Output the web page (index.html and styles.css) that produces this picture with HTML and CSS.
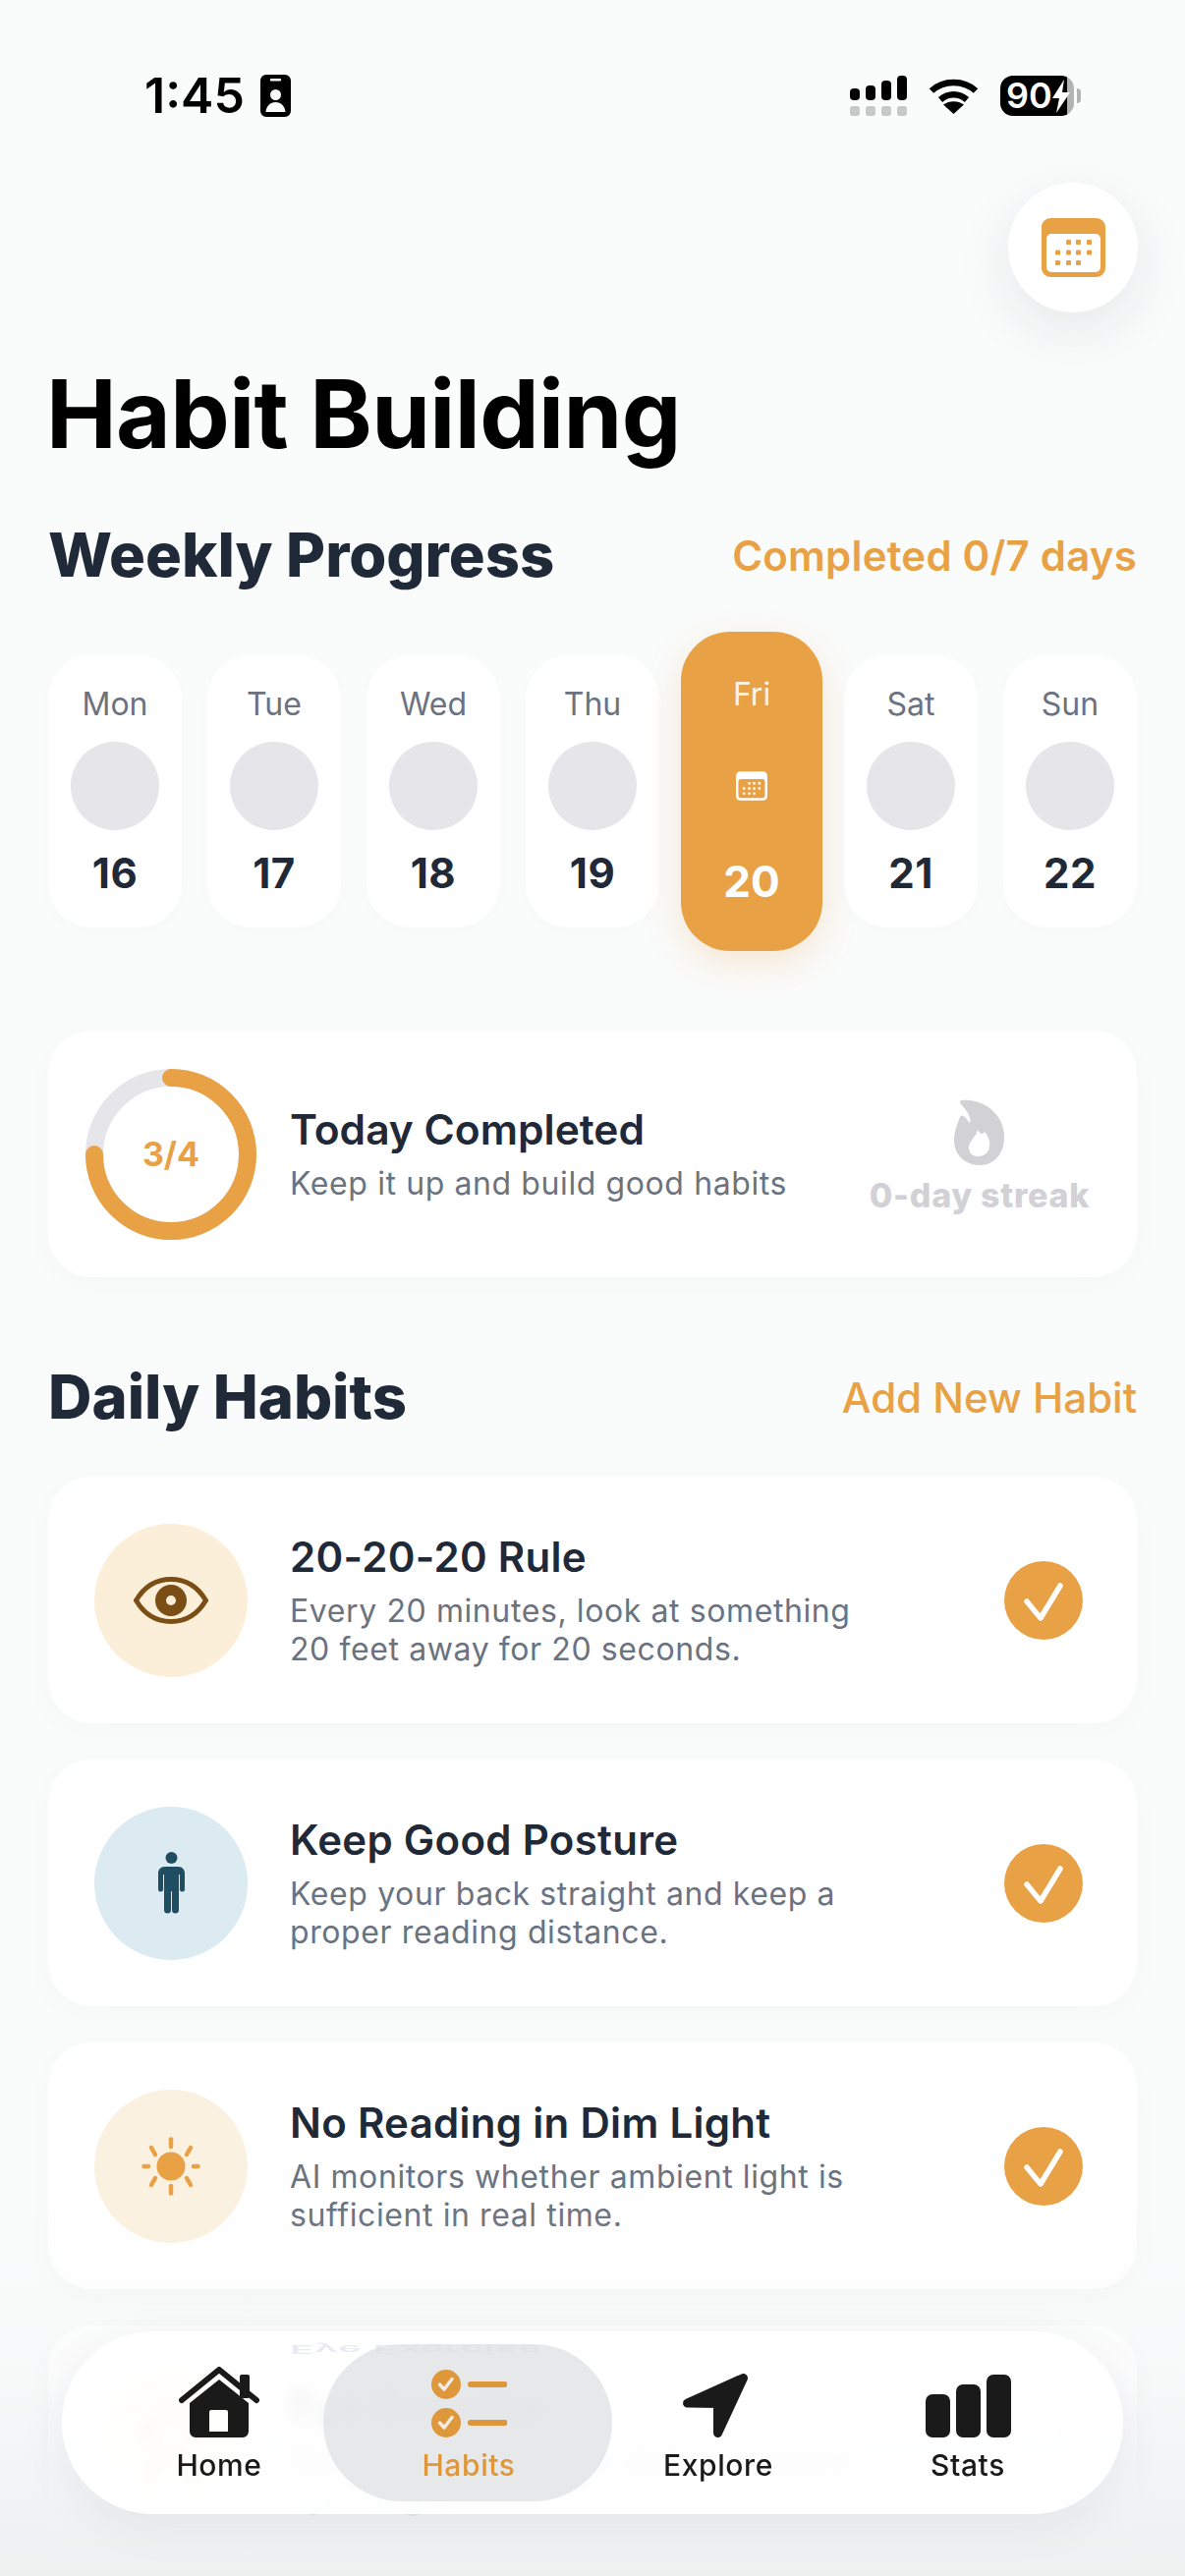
FILE: index.html
```html
<!DOCTYPE html>
<html lang="en">
<head>
  <meta charset="UTF-8" />
  <title>Habit Building</title>
  <link rel="stylesheet" href="styles.css">
</head>
<body>
  <svg class="defs" width="0" height="0">
    <symbol id="calendar" viewBox="0 0 65 60">
      <path fill-rule="evenodd" d="M9 0H56a9 9 0 0 1 9 9V51a9 9 0 0 1-9 9H9a9 9 0 0 1-9-9V9a9 9 0 0 1 9-9ZM10 16a5 5 0 0 0-5 5V50a5 5 0 0 0 5 5H55a5 5 0 0 0 5-5V21a5 5 0 0 0-5-5Z"/>
      <rect x="25" y="22" width="5" height="5" rx="1"/><rect x="35" y="22" width="5" height="5" rx="1"/><rect x="46" y="22" width="5" height="5" rx="1"/>
      <rect x="14" y="32.500" width="5" height="5" rx="1"/><rect x="25" y="32.500" width="5" height="5" rx="1"/><rect x="35" y="32.500" width="5" height="5" rx="1"/><rect x="46" y="32.500" width="5" height="5" rx="1"/>
      <rect x="14" y="43" width="5" height="5" rx="1"/><rect x="25" y="43" width="5" height="5" rx="1"/><rect x="35" y="43" width="5" height="5" rx="1"/>
    </symbol>
    <symbol id="tick" viewBox="0 0 80 80">
      <circle cx="40" cy="40" r="40" fill="#e8a145"/>
      <path d="M23 41 37 58 57 25" fill="none" stroke="#fff" stroke-width="5.500" stroke-linecap="round" stroke-linejoin="round"/>
    </symbol>
  </svg>

  <div class="status">
    <div class="status-left">
      <span class="clock">1:45</span>
      <svg class="badge-icon" viewBox="0 0 31 43"><path fill-rule="evenodd" d="M6 0H25a6 6 0 0 1 6 6V37a6 6 0 0 1-6 6H6a6 6 0 0 1-6-6V6a6 6 0 0 1 6-6ZM11 4a1 1 0 0 0 0 2.400H20a1 1 0 0 0 0-2.400ZM15.500 15a5.500 5.500 0 1 0 0 11 5.500 5.500 0 0 0 0-11ZM15.500 28C10 28 6 32 5.500 38H25.500C25 32 21 28 15.500 28Z"/></svg>
    </div>
    <div class="status-right">
      <svg class="signal-icon" viewBox="0 0 58 41">
        <rect x="0" y="13" width="10" height="12" rx="4"/><rect x="16" y="10" width="10" height="15" rx="4"/><rect x="32" y="5" width="10" height="20" rx="4"/><rect x="48" y="0" width="10" height="25" rx="4"/>
        <g fill="#c8c8c8"><rect x="0" y="31" width="10" height="10" rx="3"/><rect x="16" y="31" width="10" height="10" rx="3"/><rect x="32" y="31" width="10" height="10" rx="3"/><rect x="48" y="31" width="10" height="10" rx="3"/></g>
      </svg>
      <svg class="wifi-icon" viewBox="0 0 51 37">
        <path d="M3 13.500C15 2 36 2 48 13.500M12 22.500C20 15.500 31 15.500 39 22.500" fill="none" stroke="#000" stroke-width="6.500"/>
        <path d="M25.500 37 15 27.500C21 23 30 23 36 27.500Z"/>
      </svg>
      <div class="battery">
        <span class="battery-level">90</span>
        <svg class="bolt-icon" viewBox="0 0 18 34"><path d="M12 0 0 19H7L4 34 18 13H10Z"/></svg>
      </div>
    </div>
  </div>

  <div class="top-action">
    <button class="calendar-btn"><svg class="calendar-icon"><use href="#calendar"/></svg></button>
  </div>

  <h1 class="page-title">Habit Building</h1>

  <div class="section-head">
    <h2>Weekly Progress</h2>
    <span class="section-note">Completed 0/7 days</span>
  </div>

  <div class="week">
    <div class="day"><span class="day-name">Mon</span><span class="day-dot"></span><span class="day-num">16</span></div>
    <div class="day"><span class="day-name">Tue</span><span class="day-dot"></span><span class="day-num">17</span></div>
    <div class="day"><span class="day-name">Wed</span><span class="day-dot"></span><span class="day-num">18</span></div>
    <div class="day"><span class="day-name">Thu</span><span class="day-dot"></span><span class="day-num">19</span></div>
    <div class="day today">
      <span class="day-name">Fri</span>
      <span class="day-mark"><svg class="day-calendar"><use href="#calendar"/></svg></span>
      <span class="day-num">20</span>
    </div>
    <div class="day"><span class="day-name">Sat</span><span class="day-dot"></span><span class="day-num">21</span></div>
    <div class="day"><span class="day-name">Sun</span><span class="day-dot"></span><span class="day-num">22</span></div>
  </div>

  <div class="summary">
    <div class="ring">
      <svg viewBox="0 0 174 174">
        <circle cx="87" cy="87" r="78" fill="none" stroke="#e5e5ea" stroke-width="18"/>
        <path d="M87 9A78 78 0 1 1 9 87" fill="none" stroke="#e8a145" stroke-width="18" stroke-linecap="round"/>
      </svg>
      <span class="ring-text">3/4</span>
    </div>
    <div class="summary-text">
      <div class="summary-title">Today Completed</div>
      <div class="summary-sub">Keep it up and build good habits</div>
    </div>
    <div class="streak">
      <svg class="flame-icon" viewBox="0 0 51 67"><path fill-rule="evenodd" d="M8 1C24-1 51 10 51 39 51 56 40 67 26 67 11 67 0 56 0 42 0 32 4 24 6 18 7 16 9 16 11 18 13 20 14 22 16 24 18 20 14 12 7 5 5 3 6 1 8 1ZM24 31C27 36 29 36 31 33 35 38 37 43 36 48 35 55 30 58 24 58 18 58 15 54 15 49 15 42 22 39 24 31Z"/></svg>
      <span class="streak-text">0-day streak</span>
    </div>
  </div>

  <div class="section-head daily-head">
    <h2>Daily Habits</h2>
    <span class="section-link">Add New Habit</span>
  </div>

  <div class="habits">
    <div class="habit">
      <div class="habit-icon icon-eye">
        <svg class="eye-icon" viewBox="0 0 76 48">
          <path d="M2.500 24C12 8 24 2.500 38 2.500S64 8 73.500 24C64 40 52 45.500 38 45.500S12 40 2.500 24Z" fill="none" stroke="#7a4e14" stroke-width="5"/>
          <path fill="#7a4e14" fill-rule="evenodd" d="M38 8a16 16 0 1 0 0 32 16 16 0 0 0 0-32ZM38 19a5 5 0 1 1 0 10 5 5 0 0 1 0-10Z"/>
        </svg>
      </div>
      <div class="habit-text">
        <div class="habit-title">20-20-20 Rule</div>
        <div class="habit-desc">Every 20 minutes, look at something<br>20 feet away for 20 seconds.</div>
      </div>
      <svg class="habit-check"><use href="#tick"/></svg>
    </div>

    <div class="habit">
      <div class="habit-icon icon-posture">
        <svg class="person-icon" viewBox="0 0 27 63">
          <circle cx="13.500" cy="6" r="6"/>
          <path d="M6.500 15H20.500C24.100 15 27 17.900 27 21.500V38A2.500 2.500 0 0 1 22 38V23H21V59A3.500 3.500 0 0 1 14 59V40H13V59A3.500 3.500 0 0 1 6 59V23H5V38A2.500 2.500 0 0 1 0 38V21.500C0 17.900 2.900 15 6.500 15Z"/>
        </svg>
      </div>
      <div class="habit-text">
        <div class="habit-title">Keep Good Posture</div>
        <div class="habit-desc">Keep your back straight and keep a<br>proper reading distance.</div>
      </div>
      <svg class="habit-check"><use href="#tick"/></svg>
    </div>

    <div class="habit">
      <div class="habit-icon icon-light">
        <svg class="sun-icon" viewBox="0 0 60 60">
          <circle cx="30" cy="30" r="14.500"/>
          <g stroke="#e8a145" stroke-width="4.500" stroke-linecap="round">
            <path d="M30 2.500V10"/><path d="M30 50V57.500"/><path d="M2.500 30H7"/><path d="M53 30H57.500"/>
            <path d="M10 11 14 18"/><path d="M50 11 46 18"/><path d="M10 49 14 42"/><path d="M50 49 46 42"/>
          </g>
        </svg>
      </div>
      <div class="habit-text">
        <div class="habit-title">No Reading in Dim Light</div>
        <div class="habit-desc">AI monitors whether ambient light is<br>sufficient in real time.</div>
      </div>
      <svg class="habit-check"><use href="#tick"/></svg>
    </div>

    <div class="habit">
      <div class="habit-icon icon-exercise">
        <svg class="exercise-icon" viewBox="0 0 64 88">
          <path d="M8 34C8 14 20 6 32 6S56 14 56 34M2 24 8 36 16 26M14 60 32 46 50 60M14 60 8 84M50 60 58 84" fill="none" stroke="#e8a145" stroke-width="6" stroke-linecap="round" stroke-linejoin="round"/>
        </svg>
      </div>
      <div class="habit-text">
        <div class="habit-title">Eye Exercise</div>
        <div class="habit-desc">Rotate eyes, practice daily to reduce<br>eye fatigue.</div>
      </div>
      <span class="habit-open"></span>
    </div>
  </div>

  <div class="bottom-fade"></div>

  <nav class="tabbar">
    <span class="tabbar-glint" aria-hidden="true">Eye Exercise</span>
    <a class="tab">
      <svg class="home-icon" viewBox="0 0 82 72">
        <rect x="62" y="8" width="10" height="24" rx="2"/>
        <path d="M3 34 41 3 79 34" fill="none" stroke="#1a1a1a" stroke-width="6" stroke-linecap="round" stroke-linejoin="round"/>
        <path fill-rule="evenodd" d="M41 13 71 37V66a6 6 0 0 1-6 6H17a6 6 0 0 1-6-6V37ZM33 44a2 2 0 0 0-2 2V66H50V46a2 2 0 0 0-2-2Z"/>
      </svg>
      <span>Home</span>
    </a>
    <a class="tab active">
      <svg class="habits-icon" viewBox="0 0 77 69">
        <circle cx="15" cy="15" r="15"/><circle cx="15" cy="54" r="15"/>
        <path d="M8.500 15 13 20 21 9.500M8.500 54 13 59 21 48.500" fill="none" stroke="#f3ece2" stroke-width="3.500" stroke-linecap="round" stroke-linejoin="round"/>
        <path d="M40 15H74.500M40 54H74.500" stroke="#de973b" stroke-width="6" stroke-linecap="round"/>
      </svg>
      <span>Habits</span>
    </a>
    <a class="tab">
      <svg class="explore-icon" viewBox="0 0 66 65"><path d="M4.500 30 61.500 4.500 35.500 60.500V30.500Z" stroke="#1a1a1a" stroke-width="9" stroke-linejoin="round"/></svg>
      <span>Explore</span>
    </a>
    <a class="tab">
      <svg class="stats-icon" viewBox="0 0 87 64"><rect x="0" y="20" width="25" height="44" rx="7"/><rect x="31" y="10" width="25" height="54" rx="7"/><rect x="62" y="0" width="25" height="64" rx="7"/></svg>
      <span>Stats</span>
    </a>
  </nav>
</body>
</html>
```

FILE: styles.css
```css
* {
  box-sizing: border-box;
}

body {
  margin: 0;
  width: 1206px;
  height: 2622px;
  position: relative;
  overflow: hidden;
  background: #fafbfb;
  color: #1f2937;
  font-family: Inter, "Liberation Sans", sans-serif;
}

.defs {
  position: absolute;
}

/* status bar */
.status {
  display: flex;
  justify-content: space-between;
  align-items: flex-start;
  padding: 76px 113px 0 147px;
  height: 119px;
  color: #000;
}

.status-left {
  display: flex;
  align-items: center;
  gap: 16px;
}

.clock {
  font-size: 50px;
  font-weight: 600;
  line-height: 43px;
}

.badge-icon {
  width: 31px;
  height: 43px;
}

.status-right {
  display: flex;
  align-items: flex-start;
}

.signal-icon {
  width: 58px;
  height: 41px;
  margin-top: 1px;
}

.wifi-icon {
  width: 51px;
  height: 37px;
  margin: 3px 22px 0;
}

.battery {
  position: relative;
  width: 75px;
  height: 41px;
  margin-top: 1px;
  padding-left: 6px;
  border-radius: 13px;
  background: linear-gradient(to right, #000 68px, #b3b3b3 68px);
  color: #fff;
  font-size: 36px;
  font-weight: 600;
  line-height: 41px;
}

.battery::after {
  content: "";
  position: absolute;
  right: -7px;
  top: 13px;
  width: 4px;
  height: 15px;
  border-radius: 0 8px 8px 0;
  background: #b3b3b3;
}

.bolt-icon {
  position: absolute;
  left: 53px;
  top: 4px;
  width: 18px;
  height: 34px;
  fill: #fff;
}

/* header */
.top-action {
  display: flex;
  justify-content: flex-end;
  padding: 67px 48px 0 0;
}

.calendar-btn {
  display: flex;
  align-items: center;
  justify-content: center;
  width: 132px;
  height: 132px;
  padding: 0;
  border: none;
  border-radius: 50%;
  background: #fff;
  box-shadow: 0 18px 60px rgba(30, 40, 60, 0.09);
}

.calendar-icon {
  width: 65px;
  height: 60px;
  fill: #e8a145;
}

.page-title {
  margin: 45px 0 0 47px;
  color: #000;
  font-size: 96px;
  font-weight: 700;
  line-height: 116px;
  letter-spacing: -0.6px;
}

.section-head {
  display: flex;
  justify-content: space-between;
  align-items: center;
  height: 72px;
  margin: 50px 49px 0 49px;
}

.section-head h2 {
  margin: 0;
  font-size: 61.500px;
  font-weight: 800;
  line-height: 72px;
}

.section-note {
  color: #e8a145;
  font-size: 42px;
  font-weight: 600;
  letter-spacing: 0.2px;
}

.section-link {
  color: #e8a145;
  font-size: 42px;
  font-weight: 500;
}

/* week strip */
.week {
  display: grid;
  grid-template-columns: repeat(7, 1fr);
  gap: 26px;
  align-items: center;
  margin: 42px 49px 0 49px;
}

.day {
  display: flex;
  flex-direction: column;
  align-items: center;
  height: 277px;
  padding-top: 31px;
  border-radius: 44px;
  background: #fff;
  box-shadow: 0 4px 16px rgba(30, 40, 60, 0.015);
}

.day-name {
  color: #6b7280;
  font-size: 32px;
  line-height: 38px;
}

.day-dot {
  width: 90px;
  height: 90px;
  margin-top: 19px;
  border-radius: 50%;
  background: #e5e5ea;
}

.day-num {
  margin-top: 20px;
  font-size: 42px;
  font-weight: 700;
  line-height: 48px;
  letter-spacing: 0.5px;
}

.today {
  height: 325px;
  margin: 0 -4px;
  padding-top: 45px;
  border-radius: 50px;
  background: #e8a145;
  box-shadow: 0 12px 36px rgba(232, 161, 69, 0.22);
}

.today .day-name {
  color: #fdf4e6;
}

.day-mark {
  display: flex;
  align-items: center;
  justify-content: center;
  height: 90px;
  margin-top: 29px;
}

.day-calendar {
  width: 32px;
  height: 30px;
  fill: #fff;
}

.today .day-num {
  margin-top: 26px;
  color: #fff;
  font-size: 44px;
  line-height: 52px;
  letter-spacing: 0;
}

/* today summary */
.summary {
  display: flex;
  align-items: center;
  height: 251px;
  margin: 81px 49px 0 49px;
  padding: 0 48px 0 38px;
  border-radius: 44px;
  background: #fff;
  box-shadow: 0 8px 30px rgba(30, 40, 60, 0.025);
}

.ring {
  position: relative;
  display: flex;
  align-items: center;
  justify-content: center;
  width: 174px;
  height: 174px;
  margin-right: 34px;
}

.ring svg {
  position: absolute;
  inset: 0;
}

.ring-text {
  color: #e8a145;
  font-size: 34px;
  font-weight: 700;
}

.summary-title {
  font-size: 42.500px;
  font-weight: 600;
  line-height: 52px;
}

.summary-sub {
  margin-top: 9px;
  color: #6b7280;
  font-size: 32px;
  line-height: 40px;
  letter-spacing: 0.6px;
}

.streak {
  display: flex;
  flex-direction: column;
  align-items: center;
  gap: 11px;
  margin-left: auto;
  padding-top: 6px;
}

.flame-icon {
  width: 51px;
  height: 67px;
  fill: #d1d1d6;
}

.streak-text {
  color: #d1d1d6;
  font-size: 34px;
  font-weight: 800;
  line-height: 40px;
  letter-spacing: 0.7px;
}

.daily-head {
  margin-top: 86px;
}

/* habit list */
.habits {
  display: flex;
  flex-direction: column;
  gap: 37px;
  margin: 45px 49px 0 49px;
}

.habit {
  display: flex;
  align-items: center;
  height: 251px;
  padding: 0 55px 0 47px;
  border-radius: 44px;
  background: #fff;
  box-shadow: 0 8px 30px rgba(30, 40, 60, 0.025);
}

.habit-icon {
  display: flex;
  flex: none;
  align-items: center;
  justify-content: center;
  width: 156px;
  height: 156px;
  margin-right: 43px;
  border-radius: 50%;
}

.icon-eye {
  background: #fcefd9;
}

.icon-posture {
  background: #dceaf2;
}

.icon-light {
  background: #fbf1e0;
}

.icon-exercise {
  background: #fbf1e0;
}

.eye-icon {
  width: 76px;
  height: 48px;
}

.person-icon {
  width: 27px;
  height: 63px;
  fill: #1f4e63;
}

.sun-icon {
  width: 60px;
  height: 60px;
  fill: #e8a145;
}

.exercise-icon {
  width: 64px;
  height: 88px;
}

.habit-text {
  flex: 1;
}

.habit-title {
  font-size: 42px;
  font-weight: 600;
  line-height: 50px;
  letter-spacing: 0.3px;
}

.habit-desc {
  margin-top: 10px;
  color: #6b7280;
  font-size: 32px;
  line-height: 39px;
  letter-spacing: 0.6px;
}

.habit-check {
  flex: none;
  width: 80px;
  height: 80px;
}

.habit-open {
  flex: none;
  width: 80px;
  height: 80px;
  border: 6px solid #d9dde4;
  border-radius: 50%;
}

/* scroll edge + tab bar */
.bottom-fade {
  position: absolute;
  left: 0;
  right: 0;
  bottom: 0;
  height: 380px;
  background: linear-gradient(to bottom, rgba(240, 241, 242, 0), rgba(240, 241, 242, 0.3) 50%, rgba(240, 241, 242, 0.95) 85%, #eff0f0);
}

.tabbar {
  position: absolute;
  left: 63px;
  top: 2373px;
  display: grid;
  grid-template-columns: repeat(4, 1fr);
  width: 1080px;
  height: 186px;
  padding: 0 29px 0 31px;
  border: 2px solid rgba(255, 255, 255, 0.85);
  border-radius: 93px;
  background: rgba(255, 255, 255, 0.9);
  backdrop-filter: blur(8px);
  box-shadow: 0 12px 50px rgba(30, 40, 60, 0.06);
}

.tabbar-glint {
  position: absolute;
  left: 230px;
  top: -9px;
  color: #e9ebf1;
  font-size: 40px;
  font-weight: 600;
  line-height: 50px;
  letter-spacing: 1px;
  transform: scaleY(-0.3);
}

.tab {
  position: relative;
  display: flex;
  flex-direction: column;
  align-items: center;
  justify-content: flex-end;
  height: 152px;
  color: #1a1a1a;
  font-size: 30px;
  font-weight: 500;
  line-height: 36px;
  letter-spacing: 0.6px;
}

.tab svg {
  position: relative;
  fill: #1a1a1a;
  margin-bottom: 10px;
}

.tab span {
  position: relative;
}

.tab.active {
  color: #de973b;
}

.tab.active::before {
  content: "";
  position: absolute;
  left: -21px;
  right: -19px;
  top: 11px;
  height: 160px;
  border-radius: 80px;
  background: rgba(222, 223, 226, 0.72);
}

.tab .habits-icon {
  fill: #de973b;
}

.home-icon {
  width: 82px;
  height: 72px;
}

.habits-icon {
  width: 77px;
  height: 69px;
}

.tab .explore-icon {
  width: 66px;
  height: 65px;
  margin-right: 6px;
}

.stats-icon {
  width: 87px;
  height: 64px;
}
```
